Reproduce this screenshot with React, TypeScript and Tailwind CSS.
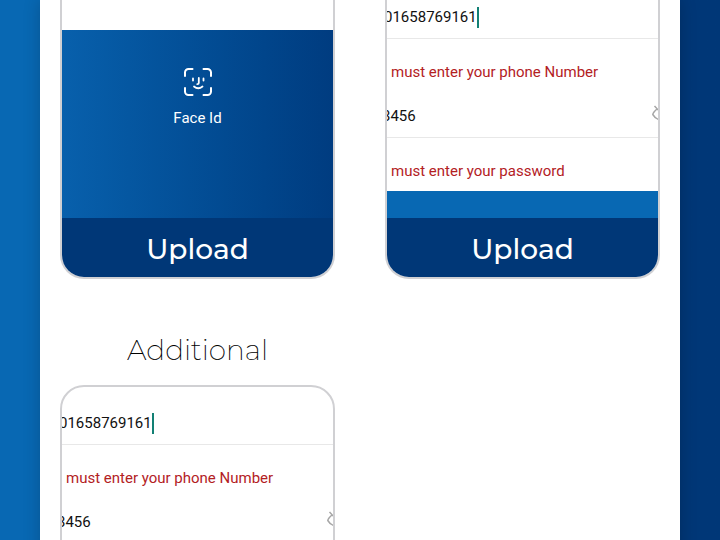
import React from "react";

function FaceIcon() {
  return (
    <svg width="28" height="28" viewBox="0 0 28 28" fill="none" stroke="currentColor" strokeWidth="2" strokeLinecap="round" aria-hidden="true">
      <path d="M1 8V4.500A3.500 3.500 0 0 1 4.500 1H8.500M19.500 1H23.500A3.500 3.500 0 0 1 27 4.500V8M27 20V23.500A3.500 3.500 0 0 1 23.500 27H19.500M8.500 27H4.500A3.500 3.500 0 0 1 1 23.500V20" />
      <path strokeWidth="1.8" d="M9 10.500v2M19.500 10.500v2M14.800 10v5q0 1.200-1.500 1.200M10 18.500q4.200 3.500 8.500 0" />
    </svg>
  );
}

function HiddenIcon() {
  return (
    <svg width="20" height="20" viewBox="0 0 20 20" fill="none" stroke="#a6a6a6" strokeWidth="1.5" aria-hidden="true">
      <path d="M2.500 1l14 15M5 4Q1 7.500 .8 9.500Q4 15 10 15q2 0 4-1M8 4.200q7-1 10.500 5.300q-.8 2-2.500 3.200" />
    </svg>
  );
}

function UploadButton() {
  return (
    <button type="button" className="h-[59px] w-full bg-[#003777] pt-0.5 font-['Montserrat','Inter',sans-serif] text-[28px] font-medium leading-8 text-white">
      Upload
    </button>
  );
}

function ErrorText({ id, children }: { id: string; children: React.ReactNode }) {
  return (
    <p id={id} className="whitespace-nowrap pl-1 pt-[22px] text-[15px] leading-[22px] text-[#b3211f]">
      {children}
    </p>
  );
}

function PhoneRow({ prefix, tall = false }: { prefix: string; tall?: boolean }) {
  return (
    <>
      <div className={`flex items-end border-b border-[#e8e8e8] pb-2.5 ${tall ? "h-[58px]" : "h-[39px]"}`}>
        <input
          type="tel"
          aria-label="Phone number"
          aria-describedby={`${prefix}-phone-error`}
          defaultValue="01658769161"
          className="-ml-[3px] h-[22px] field-sizing-content outline-none"
        />
        <span className="h-[21px] w-0.5 bg-[#128074]" />
      </div>
      <div className="h-[66px]">
        <ErrorText id={`${prefix}-phone-error`}>must enter your phone Number</ErrorText>
      </div>
    </>
  );
}

function PasswordRow() {
  return (
    <div className="flex h-[33px] items-start border-b border-[#e8e8e8]">
      <input
        type="text"
        aria-label="Password"
        defaultValue="3456"
        className="-ml-[5px] h-[22px] min-w-0 flex-1 outline-none"
      />
      <button type="button" aria-label="Show password" className="-mr-3.5 shrink-0">
        <HiddenIcon />
      </button>
    </div>
  );
}

export default function App() {
  return (
    <div className="h-screen overflow-hidden bg-linear-to-r from-[#0868b3] from-50% to-[#003777] to-50% px-10 font-[Roboto,sans-serif] text-[15px] leading-[22px] text-[#111]">
      <main className="grid min-h-full grid-cols-2 grid-rows-[279px_1fr] gap-x-[50px] bg-white px-5 shadow-[0_0_16px_rgba(0,0,0,0.2)]">
        <section className="flex flex-col overflow-hidden rounded-b-3xl border-2 border-t-0 border-[#d0d0d3]">
          <div className="h-[30px] bg-white" />
          <div className="flex flex-1 flex-col items-center bg-linear-to-r from-[#0860ac] to-[#003c80] pt-[38px] text-white">
            <FaceIcon />
            <p className="mt-[11px]">Face Id</p>
          </div>
          <UploadButton />
        </section>
        <section className="flex flex-col overflow-hidden rounded-b-3xl border-2 border-t-0 border-[#d0d0d3]">
          <PhoneRow prefix="login" />
          <PasswordRow />
          <div className="h-[53px]">
            <ErrorText id="login-password-error">must enter your password</ErrorText>
          </div>
          <div className="flex-1 bg-[#0868b3]" />
          <UploadButton />
        </section>
        <section className="flex flex-col">
          <h2 className="pb-[18px] pt-[54px] text-center font-['Montserrat','Lato',sans-serif] text-[28px] font-extralight leading-[34px] text-black">
            Additional
          </h2>
          <div className="h-[279px] overflow-hidden rounded-3xl border-2 border-[#d0d0d3]">
            <PhoneRow prefix="additional" tall />
            <PasswordRow />
          </div>
        </section>
      </main>
    </div>
  );
}
